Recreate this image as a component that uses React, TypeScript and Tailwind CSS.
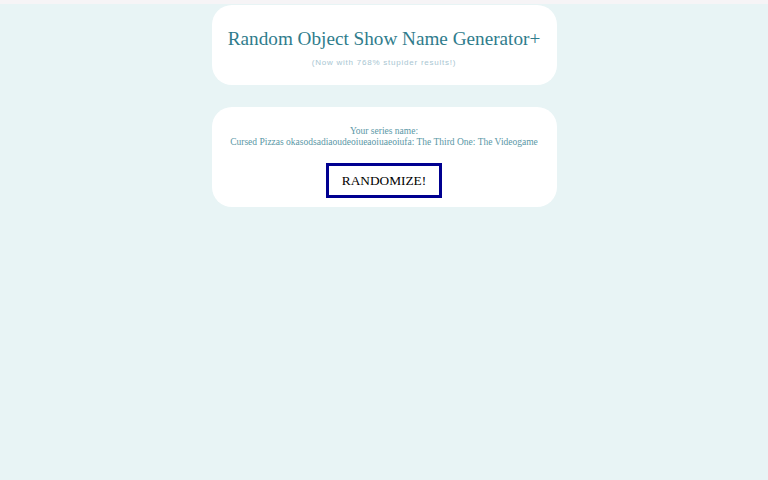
export default function App() {
  return (
    <main className="min-h-[480px] bg-[#e8f4f5] font-['Liberation_Serif',serif]">
      <div className="h-[4px] bg-[#f6f4f6]" />
      <div className="mx-auto flex w-[345px] flex-col gap-[22px] pt-[1px] text-center">
        <section className="h-[80px] rounded-[20px] bg-white pt-[21px]">
          <h1 className="text-[19.2px] leading-[26px] text-[#2f7c8c]">
            Random Object Show Name Generator+
          </h1>
          <p className="mt-[5px] font-['Liberation_Sans',sans-serif] text-[8px] leading-[12px] tracking-[0.77px] text-[#a9c6d2]">
            (Now with 768% stupider results!)
          </p>
        </section>

        <section className="flex h-[100px] flex-col items-center rounded-[20px] bg-white pt-[19px]">
          <p className="text-[9.5px] leading-[11px] text-[#5a97a6]">
            Your series name:
            <br />
            Cursed Pizzas okasodsadiaoudeoiueaoiuaeoiufa: The Third One: The Videogame
          </p>
          <button
            type="button"
            className="mt-[15px] h-[35px] w-[116px] border-[3px] border-[#000090] bg-white text-[13.33px] text-black"
          >
            RANDOMIZE!
          </button>
        </section>
      </div>
    </main>
  );
}
